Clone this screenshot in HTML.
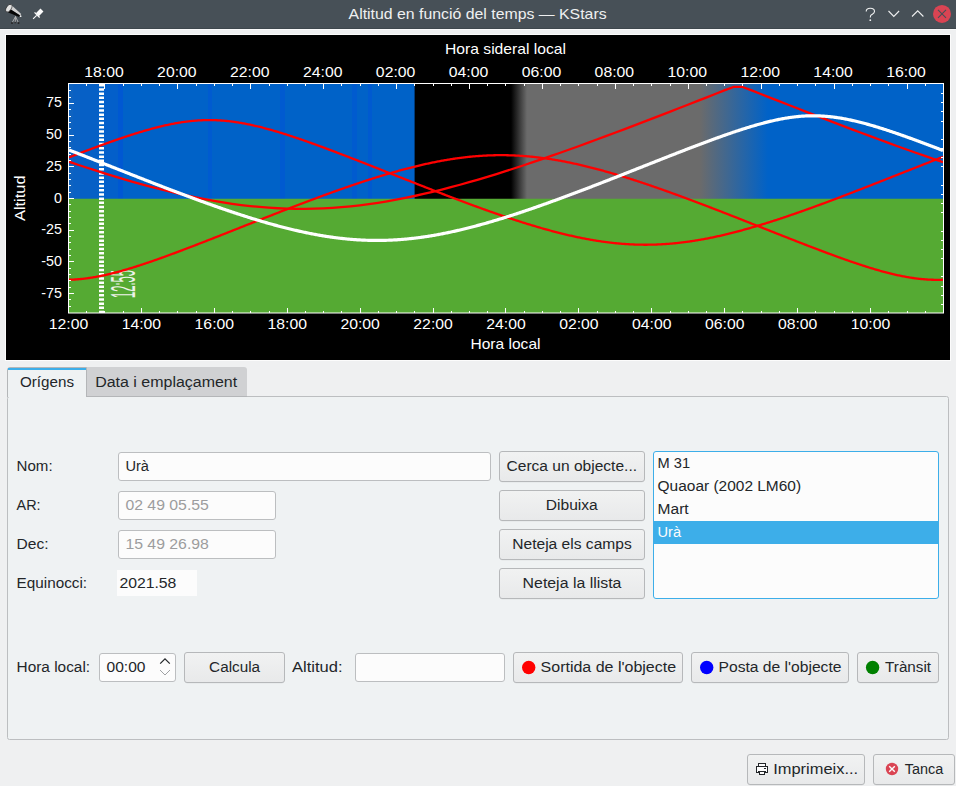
<!DOCTYPE html>
<html><head><meta charset="utf-8">
<style>
html,body{margin:0;padding:0;}
body{width:956px;height:786px;overflow:hidden;background:#eff0f1;position:relative;font-family:"Liberation Sans", sans-serif;}
svg{position:absolute;left:0;top:0;}
</style></head><body>
<svg width="956" height="786" viewBox="0 0 956 786">
<rect x="0" y="0" width="956" height="28" fill="#475057"/>
<rect x="0" y="28" width="956" height="1" fill="#3e474d"/>
<rect x="0" y="29" width="956" height="1" fill="#f8f9f9"/>
<rect x="5" y="34" width="946" height="327" fill="#fcfcfc"/>
<rect x="6" y="35" width="944" height="325" fill="#000"/>
<defs><linearGradient id="g1" x1="511" x2="527" y1="0" y2="0" gradientUnits="userSpaceOnUse"><stop offset="0" stop-color="#000"/><stop offset="1" stop-color="#6b6b6b"/></linearGradient><linearGradient id="g2" x1="700" x2="768" y1="0" y2="0" gradientUnits="userSpaceOnUse"><stop offset="0" stop-color="#6b6b6b"/><stop offset="1" stop-color="#0062c8"/></linearGradient><clipPath id="pc"><rect x="69" y="84" width="874" height="229"/></clipPath></defs>
<rect x="69" y="84" width="346" height="115" fill="#0062c8"/>
<rect x="69" y="84" width="4" height="115" fill="#0f63c0"/>
<rect x="73" y="84" width="7" height="115" fill="#0a61c4"/>
<rect x="80" y="84" width="19" height="115" fill="#0660c6"/>
<rect x="104" y="84" width="14" height="115" fill="#035fca"/>
<rect x="118" y="84" width="5" height="115" fill="#0058d2"/>
<rect x="208" y="84" width="4" height="115" fill="#005bd0"/>
<rect x="280" y="84" width="5" height="115" fill="#005ad0"/>
<rect x="352" y="84" width="5" height="115" fill="#005bcf"/>
<rect x="368" y="84" width="4" height="115" fill="#005ad0"/>
<rect x="414.6" y="84" width="96.4" height="115" fill="#000"/>
<rect x="511" y="84" width="16" height="115" fill="url(#g1)"/>
<rect x="527" y="84" width="173" height="115" fill="#6b6b6b"/>
<rect x="700" y="84" width="68" height="115" fill="url(#g2)"/>
<rect x="768" y="84" width="175" height="115" fill="#0062c8"/>
<rect x="69" y="198.75" width="874" height="114.25" fill="#55aa33"/>
<line x1="101.5" y1="84" x2="101.5" y2="313" stroke="#fff" stroke-width="5" stroke-dasharray="2.5 1.7"/>
<text transform="translate(134.6,298) rotate(-90) scale(1,2.95)" font-family='"Liberation Sans", sans-serif' font-size="12" fill="#eef2ea" textLength="28" lengthAdjust="spacingAndGlyphs">12:55</text>
<g clip-path="url(#pc)" fill="none" stroke-linejoin="round">
<polyline points="69.00,157.42 70.00,157.03 71.00,156.65 72.00,156.26 73.00,155.87 74.00,155.49 75.00,155.11 76.00,154.72 77.00,154.34 78.00,153.95 79.00,153.57 80.00,153.19 81.00,152.81 82.00,152.43 83.00,152.05 84.00,151.67 85.00,151.29 86.00,150.91 87.00,150.53 88.00,150.16 89.00,149.78 90.00,149.41 91.00,149.03 92.00,148.66 93.00,148.29 94.00,147.91 95.00,147.54 96.00,147.17 97.00,146.80 98.00,146.44 99.00,146.07 100.00,145.70 101.00,145.34 102.00,144.97 103.00,144.61 104.00,144.25 105.00,143.88 106.00,143.52 107.00,143.17 108.00,142.81 109.00,142.45 110.00,142.10 111.00,141.74 112.00,141.39 113.00,141.04 114.00,140.69 115.00,140.34 116.00,139.99 117.00,139.64 118.00,139.30 119.00,138.95 120.00,138.61 121.00,138.27 122.00,137.93 123.00,137.60 124.00,137.26 125.00,136.93 126.00,136.60 127.00,136.27 128.00,135.94 129.00,135.61 130.00,135.29 131.00,134.96 132.00,134.64 133.00,134.32 134.00,134.01 135.00,133.69 136.00,133.38 137.00,133.07 138.00,132.76 139.00,132.45 140.00,132.15 141.00,131.85 142.00,131.55 143.00,131.25 144.00,130.96 145.00,130.67 146.00,130.38 147.00,130.09 148.00,129.81 149.00,129.53 150.00,129.25 151.00,128.98 152.00,128.70 153.00,128.43 154.00,128.17 155.00,127.91 156.00,127.65 157.00,127.39 158.00,127.14 159.00,126.89 160.00,126.64 161.00,126.40 162.00,126.16 163.00,125.92 164.00,125.69 165.00,125.46 166.00,125.24 167.00,125.02 168.00,124.80 169.00,124.59 170.00,124.38 171.00,124.18 172.00,123.98 173.00,123.78 174.00,123.59 175.00,123.40 176.00,123.22 177.00,123.04 178.00,122.87 179.00,122.70 180.00,122.54 181.00,122.38 182.00,122.22 183.00,122.08 184.00,121.93 185.00,121.79 186.00,121.66 187.00,121.53 188.00,121.40 189.00,121.29 190.00,121.17 191.00,121.07 192.00,120.96 193.00,120.87 194.00,120.78 195.00,120.69 196.00,120.61 197.00,120.53 198.00,120.47 199.00,120.40 200.00,120.35 201.00,120.29 202.00,120.25 203.00,120.21 204.00,120.17 205.00,120.15 206.00,120.12 207.00,120.11 208.00,120.10 209.00,120.09 210.00,120.09 211.00,120.10 212.00,120.11 213.00,120.13 214.00,120.16 215.00,120.19 216.00,120.22 217.00,120.27 218.00,120.31 219.00,120.37 220.00,120.43 221.00,120.49 222.00,120.56 223.00,120.64 224.00,120.72 225.00,120.81 226.00,120.90 227.00,121.00 228.00,121.11 229.00,121.22 230.00,121.33 231.00,121.45 232.00,121.58 233.00,121.71 234.00,121.85 235.00,121.99 236.00,122.13 237.00,122.29 238.00,122.44 239.00,122.60 240.00,122.77 241.00,122.94 242.00,123.11 243.00,123.29 244.00,123.48 245.00,123.67 246.00,123.86 247.00,124.06 248.00,124.26 249.00,124.46 250.00,124.67 251.00,124.89 252.00,125.11 253.00,125.33 254.00,125.55 255.00,125.78 256.00,126.02 257.00,126.25 258.00,126.50 259.00,126.74 260.00,126.99 261.00,127.24 262.00,127.49 263.00,127.75 264.00,128.01 265.00,128.28 266.00,128.54 267.00,128.81 268.00,129.09 269.00,129.36 270.00,129.64 271.00,129.92 272.00,130.21 273.00,130.49 274.00,130.78 275.00,131.08 276.00,131.37 277.00,131.67 278.00,131.97 279.00,132.27 280.00,132.58 281.00,132.88 282.00,133.19 283.00,133.50 284.00,133.82 285.00,134.13 286.00,134.45 287.00,134.77 288.00,135.09 289.00,135.42 290.00,135.74 291.00,136.07 292.00,136.40 293.00,136.73 294.00,137.06 295.00,137.40 296.00,137.73 297.00,138.07 298.00,138.41 299.00,138.75 300.00,139.09 301.00,139.44 302.00,139.78 303.00,140.13 304.00,140.48 305.00,140.83 306.00,141.18 307.00,141.53 308.00,141.88 309.00,142.24 310.00,142.59 311.00,142.95 312.00,143.31 313.00,143.67 314.00,144.03 315.00,144.39 316.00,144.75 317.00,145.12 318.00,145.48 319.00,145.85 320.00,146.22 321.00,146.58 322.00,146.95 323.00,147.32 324.00,147.69 325.00,148.06 326.00,148.44 327.00,148.81 328.00,149.18 329.00,149.56 330.00,149.93 331.00,150.31 332.00,150.69 333.00,151.06 334.00,151.44 335.00,151.82 336.00,152.20 337.00,152.58 338.00,152.96 339.00,153.34 340.00,153.72 341.00,154.11 342.00,154.49 343.00,154.87 344.00,155.26 345.00,155.64 346.00,156.03 347.00,156.41 348.00,156.80 349.00,157.19 350.00,157.58 351.00,157.96 352.00,158.35 353.00,158.74 354.00,159.13 355.00,159.52 356.00,159.91 357.00,160.30 358.00,160.69 359.00,161.08 360.00,161.47 361.00,161.86 362.00,162.25 363.00,162.64 364.00,163.04 365.00,163.43 366.00,163.82 367.00,164.21 368.00,164.61 369.00,165.00 370.00,165.39 371.00,165.79 372.00,166.18 373.00,166.58 374.00,166.97 375.00,167.36 376.00,167.76 377.00,168.15 378.00,168.55 379.00,168.94 380.00,169.34 381.00,169.73 382.00,170.13 383.00,170.52 384.00,170.92 385.00,171.31 386.00,171.71 387.00,172.11 388.00,172.50 389.00,172.90 390.00,173.29 391.00,173.69 392.00,174.08 393.00,174.48 394.00,174.87 395.00,175.27 396.00,175.67 397.00,176.06 398.00,176.46 399.00,176.85 400.00,177.25 401.00,177.64 402.00,178.04 403.00,178.43 404.00,178.83 405.00,179.22 406.00,179.62 407.00,180.01 408.00,180.41 409.00,180.80 410.00,181.19 411.00,181.59 412.00,181.98 413.00,182.37 414.00,182.77 415.00,183.16 416.00,183.55 417.00,183.95 418.00,184.34 419.00,184.73 420.00,185.12 421.00,185.52 422.00,185.91 423.00,186.30 424.00,186.69 425.00,187.08 426.00,187.47 427.00,187.86 428.00,188.25 429.00,188.64 430.00,189.03 431.00,189.42 432.00,189.81 433.00,190.20 434.00,190.58 435.00,190.97 436.00,191.36 437.00,191.75 438.00,192.13 439.00,192.52 440.00,192.90 441.00,193.29 442.00,193.67 443.00,194.06 444.00,194.44 445.00,194.83 446.00,195.21 447.00,195.59 448.00,195.97 449.00,196.36 450.00,196.74 451.00,197.12 452.00,197.50 453.00,197.88 454.00,198.26 455.00,198.64 456.00,199.01 457.00,199.39 458.00,199.77 459.00,200.14 460.00,200.52 461.00,200.90 462.00,201.27 463.00,201.64 464.00,202.02 465.00,202.39 466.00,202.76 467.00,203.13 468.00,203.51 469.00,203.88 470.00,204.24 471.00,204.61 472.00,204.98 473.00,205.35 474.00,205.72 475.00,206.08 476.00,206.45 477.00,206.81 478.00,207.17 479.00,207.54 480.00,207.90 481.00,208.26 482.00,208.62 483.00,208.98 484.00,209.34 485.00,209.70 486.00,210.05 487.00,210.41 488.00,210.77 489.00,211.12 490.00,211.47 491.00,211.83 492.00,212.18 493.00,212.53 494.00,212.88 495.00,213.23 496.00,213.58 497.00,213.92 498.00,214.27 499.00,214.61 500.00,214.96 501.00,215.30 502.00,215.64 503.00,215.98 504.00,216.32 505.00,216.66 506.00,217.00 507.00,217.33 508.00,217.67 509.00,218.00 510.00,218.33 511.00,218.67 512.00,219.00 513.00,219.32 514.00,219.65 515.00,219.98 516.00,220.30 517.00,220.63 518.00,220.95 519.00,221.27 520.00,221.59 521.00,221.91 522.00,222.23 523.00,222.54 524.00,222.86 525.00,223.17 526.00,223.48 527.00,223.79 528.00,224.10 529.00,224.41 530.00,224.72 531.00,225.02 532.00,225.32 533.00,225.62 534.00,225.92 535.00,226.22 536.00,226.52 537.00,226.81 538.00,227.11 539.00,227.40 540.00,227.69 541.00,227.98 542.00,228.26 543.00,228.55 544.00,228.83 545.00,229.11 546.00,229.39 547.00,229.67 548.00,229.94 549.00,230.22 550.00,230.49 551.00,230.76 552.00,231.03 553.00,231.30 554.00,231.56 555.00,231.82 556.00,232.08 557.00,232.34 558.00,232.60 559.00,232.85 560.00,233.10 561.00,233.35 562.00,233.60 563.00,233.85 564.00,234.09 565.00,234.33 566.00,234.57 567.00,234.81 568.00,235.04 569.00,235.28 570.00,235.51 571.00,235.73 572.00,235.96 573.00,236.18 574.00,236.40 575.00,236.62 576.00,236.84 577.00,237.05 578.00,237.26 579.00,237.47 580.00,237.68 581.00,237.88 582.00,238.08 583.00,238.28 584.00,238.47 585.00,238.67 586.00,238.86 587.00,239.05 588.00,239.23 589.00,239.41 590.00,239.59 591.00,239.77 592.00,239.94 593.00,240.11 594.00,240.28 595.00,240.45 596.00,240.61 597.00,240.77 598.00,240.93 599.00,241.08 600.00,241.23 601.00,241.38 602.00,241.53 603.00,241.67 604.00,241.81 605.00,241.94 606.00,242.08 607.00,242.21 608.00,242.33 609.00,242.46 610.00,242.58 611.00,242.70 612.00,242.81 613.00,242.92 614.00,243.03 615.00,243.14 616.00,243.24 617.00,243.34 618.00,243.43 619.00,243.52 620.00,243.61 621.00,243.70 622.00,243.78 623.00,243.86 624.00,243.93 625.00,244.00 626.00,244.07 627.00,244.14 628.00,244.20 629.00,244.26 630.00,244.32 631.00,244.37 632.00,244.42 633.00,244.46 634.00,244.50 635.00,244.54 636.00,244.58 637.00,244.61 638.00,244.63 639.00,244.66 640.00,244.68 641.00,244.70 642.00,244.71 643.00,244.72 644.00,244.73 645.00,244.73 646.00,244.73 647.00,244.73 648.00,244.72 649.00,244.71 650.00,244.70 651.00,244.68 652.00,244.66 653.00,244.64 654.00,244.61 655.00,244.58 656.00,244.55 657.00,244.51 658.00,244.47 659.00,244.43 660.00,244.38 661.00,244.33 662.00,244.27 663.00,244.21 664.00,244.15 665.00,244.09 666.00,244.02 667.00,243.95 668.00,243.87 669.00,243.80 670.00,243.71 671.00,243.63 672.00,243.54 673.00,243.45 674.00,243.36 675.00,243.26 676.00,243.16 677.00,243.05 678.00,242.94 679.00,242.83 680.00,242.72 681.00,242.60 682.00,242.48 683.00,242.36 684.00,242.23 685.00,242.10 686.00,241.97 687.00,241.84 688.00,241.70 689.00,241.56 690.00,241.41 691.00,241.26 692.00,241.11 693.00,240.96 694.00,240.80 695.00,240.64 696.00,240.48 697.00,240.32 698.00,240.15 699.00,239.98 700.00,239.81 701.00,239.63 702.00,239.45 703.00,239.27 704.00,239.08 705.00,238.90 706.00,238.71 707.00,238.51 708.00,238.32 709.00,238.12 710.00,237.92 711.00,237.72 712.00,237.51 713.00,237.30 714.00,237.09 715.00,236.88 716.00,236.67 717.00,236.45 718.00,236.23 719.00,236.01 720.00,235.78 721.00,235.55 722.00,235.32 723.00,235.09 724.00,234.86 725.00,234.62 726.00,234.38 727.00,234.14 728.00,233.90 729.00,233.65 730.00,233.40 731.00,233.16 732.00,232.90 733.00,232.65 734.00,232.39 735.00,232.14 736.00,231.88 737.00,231.61 738.00,231.35 739.00,231.08 740.00,230.82 741.00,230.55 742.00,230.28 743.00,230.00 744.00,229.73 745.00,229.45 746.00,229.17 747.00,228.89 748.00,228.61 749.00,228.32 750.00,228.04 751.00,227.75 752.00,227.46 753.00,227.17 754.00,226.87 755.00,226.58 756.00,226.28 757.00,225.99 758.00,225.69 759.00,225.39 760.00,225.08 761.00,224.78 762.00,224.47 763.00,224.17 764.00,223.86 765.00,223.55 766.00,223.24 767.00,222.92 768.00,222.61 769.00,222.29 770.00,221.98 771.00,221.66 772.00,221.34 773.00,221.02 774.00,220.70 775.00,220.37 776.00,220.05 777.00,219.72 778.00,219.39 779.00,219.06 780.00,218.73 781.00,218.40 782.00,218.07 783.00,217.74 784.00,217.40 785.00,217.07 786.00,216.73 787.00,216.39 788.00,216.05 789.00,215.71 790.00,215.37 791.00,215.03 792.00,214.68 793.00,214.34 794.00,213.99 795.00,213.65 796.00,213.30 797.00,212.95 798.00,212.60 799.00,212.25 800.00,211.90 801.00,211.55 802.00,211.19 803.00,210.84 804.00,210.48 805.00,210.13 806.00,209.77 807.00,209.41 808.00,209.05 809.00,208.70 810.00,208.34 811.00,207.97 812.00,207.61 813.00,207.25 814.00,206.89 815.00,206.52 816.00,206.16 817.00,205.79 818.00,205.42 819.00,205.06 820.00,204.69 821.00,204.32 822.00,203.95 823.00,203.58 824.00,203.21 825.00,202.84 826.00,202.47 827.00,202.10 828.00,201.72 829.00,201.35 830.00,200.97 831.00,200.60 832.00,200.22 833.00,199.85 834.00,199.47 835.00,199.09 836.00,198.71 837.00,198.34 838.00,197.96 839.00,197.58 840.00,197.20 841.00,196.82 842.00,196.44 843.00,196.05 844.00,195.67 845.00,195.29 846.00,194.91 847.00,194.52 848.00,194.14 849.00,193.75 850.00,193.37 851.00,192.98 852.00,192.60 853.00,192.21 854.00,191.83 855.00,191.44 856.00,191.05 857.00,190.66 858.00,190.28 859.00,189.89 860.00,189.50 861.00,189.11 862.00,188.72 863.00,188.33 864.00,187.94 865.00,187.55 866.00,187.16 867.00,186.77 868.00,186.38 869.00,185.99 870.00,185.60 871.00,185.21 872.00,184.81 873.00,184.42 874.00,184.03 875.00,183.64 876.00,183.24 877.00,182.85 878.00,182.46 879.00,182.06 880.00,181.67 881.00,181.27 882.00,180.88 883.00,180.49 884.00,180.09 885.00,179.70 886.00,179.30 887.00,178.91 888.00,178.51 889.00,178.12 890.00,177.72 891.00,177.33 892.00,176.93 893.00,176.54 894.00,176.14 895.00,175.75 896.00,175.35 897.00,174.96 898.00,174.56 899.00,174.16 900.00,173.77 901.00,173.37 902.00,172.98 903.00,172.58 904.00,172.19 905.00,171.79 906.00,171.40 907.00,171.00 908.00,170.61 909.00,170.21 910.00,169.81 911.00,169.42 912.00,169.02 913.00,168.63 914.00,168.23 915.00,167.84 916.00,167.45 917.00,167.05 918.00,166.66 919.00,166.26 920.00,165.87 921.00,165.47 922.00,165.08 923.00,164.69 924.00,164.29 925.00,163.90 926.00,163.51 927.00,163.12 928.00,162.72 929.00,162.33 930.00,161.94 931.00,161.55 932.00,161.16 933.00,160.77 934.00,160.38 935.00,159.99 936.00,159.60 937.00,159.21 938.00,158.82 939.00,158.43 940.00,158.04 941.00,157.66 942.00,157.27 943.00,156.88" stroke="#ff0000" stroke-width="2.3"/>
<polyline points="69.00,279.76 70.00,279.73 71.00,279.70 72.00,279.65 73.00,279.60 74.00,279.55 75.00,279.49 76.00,279.42 77.00,279.35 78.00,279.27 79.00,279.18 80.00,279.09 81.00,278.99 82.00,278.89 83.00,278.78 84.00,278.67 85.00,278.54 86.00,278.42 87.00,278.29 88.00,278.15 89.00,278.01 90.00,277.86 91.00,277.71 92.00,277.55 93.00,277.38 94.00,277.21 95.00,277.04 96.00,276.86 97.00,276.68 98.00,276.49 99.00,276.30 100.00,276.10 101.00,275.90 102.00,275.69 103.00,275.48 104.00,275.26 105.00,275.05 106.00,274.82 107.00,274.59 108.00,274.36 109.00,274.13 110.00,273.89 111.00,273.64 112.00,273.40 113.00,273.15 114.00,272.89 115.00,272.63 116.00,272.37 117.00,272.11 118.00,271.84 119.00,271.57 120.00,271.30 121.00,271.02 122.00,270.74 123.00,270.46 124.00,270.17 125.00,269.88 126.00,269.59 127.00,269.30 128.00,269.00 129.00,268.70 130.00,268.40 131.00,268.09 132.00,267.79 133.00,267.48 134.00,267.17 135.00,266.85 136.00,266.54 137.00,266.22 138.00,265.90 139.00,265.58 140.00,265.25 141.00,264.92 142.00,264.60 143.00,264.27 144.00,263.93 145.00,263.60 146.00,263.26 147.00,262.93 148.00,262.59 149.00,262.25 150.00,261.91 151.00,261.56 152.00,261.22 153.00,260.87 154.00,260.52 155.00,260.17 156.00,259.82 157.00,259.47 158.00,259.11 159.00,258.76 160.00,258.40 161.00,258.05 162.00,257.69 163.00,257.33 164.00,256.97 165.00,256.60 166.00,256.24 167.00,255.88 168.00,255.51 169.00,255.14 170.00,254.78 171.00,254.41 172.00,254.04 173.00,253.67 174.00,253.30 175.00,252.93 176.00,252.55 177.00,252.18 178.00,251.80 179.00,251.43 180.00,251.05 181.00,250.68 182.00,250.30 183.00,249.92 184.00,249.54 185.00,249.16 186.00,248.78 187.00,248.40 188.00,248.02 189.00,247.64 190.00,247.25 191.00,246.87 192.00,246.49 193.00,246.10 194.00,245.72 195.00,245.33 196.00,244.94 197.00,244.56 198.00,244.17 199.00,243.78 200.00,243.40 201.00,243.01 202.00,242.62 203.00,242.23 204.00,241.84 205.00,241.45 206.00,241.06 207.00,240.67 208.00,240.28 209.00,239.89 210.00,239.50 211.00,239.11 212.00,238.71 213.00,238.32 214.00,237.93 215.00,237.54 216.00,237.14 217.00,236.75 218.00,236.36 219.00,235.96 220.00,235.57 221.00,235.17 222.00,234.78 223.00,234.39 224.00,233.99 225.00,233.60 226.00,233.20 227.00,232.81 228.00,232.41 229.00,232.02 230.00,231.62 231.00,231.23 232.00,230.83 233.00,230.44 234.00,230.04 235.00,229.65 236.00,229.25 237.00,228.85 238.00,228.46 239.00,228.06 240.00,227.67 241.00,227.27 242.00,226.88 243.00,226.48 244.00,226.09 245.00,225.69 246.00,225.29 247.00,224.90 248.00,224.50 249.00,224.11 250.00,223.71 251.00,223.32 252.00,222.92 253.00,222.53 254.00,222.13 255.00,221.74 256.00,221.34 257.00,220.95 258.00,220.56 259.00,220.16 260.00,219.77 261.00,219.37 262.00,218.98 263.00,218.59 264.00,218.19 265.00,217.80 266.00,217.41 267.00,217.02 268.00,216.62 269.00,216.23 270.00,215.84 271.00,215.45 272.00,215.06 273.00,214.67 274.00,214.28 275.00,213.89 276.00,213.50 277.00,213.11 278.00,212.72 279.00,212.33 280.00,211.94 281.00,211.55 282.00,211.16 283.00,210.77 284.00,210.39 285.00,210.00 286.00,209.61 287.00,209.23 288.00,208.84 289.00,208.46 290.00,208.07 291.00,207.69 292.00,207.30 293.00,206.92 294.00,206.53 295.00,206.15 296.00,205.77 297.00,205.39 298.00,205.00 299.00,204.62 300.00,204.24 301.00,203.86 302.00,203.48 303.00,203.10 304.00,202.73 305.00,202.35 306.00,201.97 307.00,201.59 308.00,201.22 309.00,200.84 310.00,200.47 311.00,200.09 312.00,199.72 313.00,199.34 314.00,198.97 315.00,198.60 316.00,198.23 317.00,197.86 318.00,197.48 319.00,197.12 320.00,196.75 321.00,196.38 322.00,196.01 323.00,195.64 324.00,195.28 325.00,194.91 326.00,194.55 327.00,194.18 328.00,193.82 329.00,193.46 330.00,193.10 331.00,192.73 332.00,192.37 333.00,192.02 334.00,191.66 335.00,191.30 336.00,190.94 337.00,190.59 338.00,190.23 339.00,189.88 340.00,189.52 341.00,189.17 342.00,188.82 343.00,188.47 344.00,188.12 345.00,187.77 346.00,187.42 347.00,187.08 348.00,186.73 349.00,186.39 350.00,186.04 351.00,185.70 352.00,185.36 353.00,185.02 354.00,184.68 355.00,184.34 356.00,184.00 357.00,183.66 358.00,183.33 359.00,182.99 360.00,182.66 361.00,182.33 362.00,182.00 363.00,181.67 364.00,181.34 365.00,181.01 366.00,180.69 367.00,180.36 368.00,180.04 369.00,179.72 370.00,179.40 371.00,179.08 372.00,178.76 373.00,178.44 374.00,178.12 375.00,177.81 376.00,177.50 377.00,177.19 378.00,176.88 379.00,176.57 380.00,176.26 381.00,175.95 382.00,175.65 383.00,175.35 384.00,175.04 385.00,174.74 386.00,174.45 387.00,174.15 388.00,173.85 389.00,173.56 390.00,173.27 391.00,172.98 392.00,172.69 393.00,172.40 394.00,172.12 395.00,171.83 396.00,171.55 397.00,171.27 398.00,170.99 399.00,170.71 400.00,170.44 401.00,170.16 402.00,169.89 403.00,169.62 404.00,169.36 405.00,169.09 406.00,168.83 407.00,168.56 408.00,168.30 409.00,168.04 410.00,167.79 411.00,167.53 412.00,167.28 413.00,167.03 414.00,166.78 415.00,166.54 416.00,166.29 417.00,166.05 418.00,165.81 419.00,165.57 420.00,165.34 421.00,165.10 422.00,164.87 423.00,164.64 424.00,164.42 425.00,164.19 426.00,163.97 427.00,163.75 428.00,163.53 429.00,163.32 430.00,163.10 431.00,162.89 432.00,162.69 433.00,162.48 434.00,162.28 435.00,162.08 436.00,161.88 437.00,161.68 438.00,161.49 439.00,161.30 440.00,161.11 441.00,160.93 442.00,160.74 443.00,160.56 444.00,160.39 445.00,160.21 446.00,160.04 447.00,159.87 448.00,159.70 449.00,159.54 450.00,159.38 451.00,159.22 452.00,159.06 453.00,158.91 454.00,158.76 455.00,158.61 456.00,158.47 457.00,158.33 458.00,158.19 459.00,158.05 460.00,157.92 461.00,157.79 462.00,157.66 463.00,157.54 464.00,157.42 465.00,157.30 466.00,157.19 467.00,157.08 468.00,156.97 469.00,156.86 470.00,156.76 471.00,156.66 472.00,156.56 473.00,156.47 474.00,156.38 475.00,156.29 476.00,156.21 477.00,156.13 478.00,156.05 479.00,155.98 480.00,155.91 481.00,155.84 482.00,155.78 483.00,155.72 484.00,155.66 485.00,155.60 486.00,155.55 487.00,155.50 488.00,155.46 489.00,155.42 490.00,155.38 491.00,155.34 492.00,155.31 493.00,155.29 494.00,155.26 495.00,155.24 496.00,155.22 497.00,155.21 498.00,155.19 499.00,155.19 500.00,155.18 501.00,155.18 502.00,155.18 503.00,155.19 504.00,155.19 505.00,155.21 506.00,155.22 507.00,155.24 508.00,155.26 509.00,155.29 510.00,155.31 511.00,155.34 512.00,155.38 513.00,155.42 514.00,155.46 515.00,155.50 516.00,155.55 517.00,155.60 518.00,155.66 519.00,155.72 520.00,155.78 521.00,155.84 522.00,155.91 523.00,155.98 524.00,156.05 525.00,156.13 526.00,156.21 527.00,156.29 528.00,156.38 529.00,156.47 530.00,156.56 531.00,156.66 532.00,156.76 533.00,156.86 534.00,156.97 535.00,157.08 536.00,157.19 537.00,157.30 538.00,157.42 539.00,157.54 540.00,157.66 541.00,157.79 542.00,157.92 543.00,158.05 544.00,158.19 545.00,158.33 546.00,158.47 547.00,158.61 548.00,158.76 549.00,158.91 550.00,159.06 551.00,159.22 552.00,159.38 553.00,159.54 554.00,159.70 555.00,159.87 556.00,160.04 557.00,160.21 558.00,160.39 559.00,160.56 560.00,160.74 561.00,160.93 562.00,161.11 563.00,161.30 564.00,161.49 565.00,161.68 566.00,161.88 567.00,162.08 568.00,162.28 569.00,162.48 570.00,162.69 571.00,162.89 572.00,163.10 573.00,163.32 574.00,163.53 575.00,163.75 576.00,163.97 577.00,164.19 578.00,164.42 579.00,164.64 580.00,164.87 581.00,165.10 582.00,165.34 583.00,165.57 584.00,165.81 585.00,166.05 586.00,166.29 587.00,166.54 588.00,166.78 589.00,167.03 590.00,167.28 591.00,167.53 592.00,167.79 593.00,168.04 594.00,168.30 595.00,168.56 596.00,168.83 597.00,169.09 598.00,169.36 599.00,169.62 600.00,169.89 601.00,170.16 602.00,170.44 603.00,170.71 604.00,170.99 605.00,171.27 606.00,171.55 607.00,171.83 608.00,172.12 609.00,172.40 610.00,172.69 611.00,172.98 612.00,173.27 613.00,173.56 614.00,173.85 615.00,174.15 616.00,174.45 617.00,174.74 618.00,175.04 619.00,175.35 620.00,175.65 621.00,175.95 622.00,176.26 623.00,176.57 624.00,176.88 625.00,177.19 626.00,177.50 627.00,177.81 628.00,178.12 629.00,178.44 630.00,178.76 631.00,179.08 632.00,179.40 633.00,179.72 634.00,180.04 635.00,180.36 636.00,180.69 637.00,181.01 638.00,181.34 639.00,181.67 640.00,182.00 641.00,182.33 642.00,182.66 643.00,182.99 644.00,183.33 645.00,183.66 646.00,184.00 647.00,184.34 648.00,184.68 649.00,185.02 650.00,185.36 651.00,185.70 652.00,186.04 653.00,186.39 654.00,186.73 655.00,187.08 656.00,187.42 657.00,187.77 658.00,188.12 659.00,188.47 660.00,188.82 661.00,189.17 662.00,189.52 663.00,189.88 664.00,190.23 665.00,190.59 666.00,190.94 667.00,191.30 668.00,191.66 669.00,192.02 670.00,192.37 671.00,192.73 672.00,193.10 673.00,193.46 674.00,193.82 675.00,194.18 676.00,194.55 677.00,194.91 678.00,195.28 679.00,195.64 680.00,196.01 681.00,196.38 682.00,196.75 683.00,197.12 684.00,197.48 685.00,197.86 686.00,198.23 687.00,198.60 688.00,198.97 689.00,199.34 690.00,199.72 691.00,200.09 692.00,200.47 693.00,200.84 694.00,201.22 695.00,201.59 696.00,201.97 697.00,202.35 698.00,202.73 699.00,203.10 700.00,203.48 701.00,203.86 702.00,204.24 703.00,204.62 704.00,205.00 705.00,205.39 706.00,205.77 707.00,206.15 708.00,206.53 709.00,206.92 710.00,207.30 711.00,207.69 712.00,208.07 713.00,208.46 714.00,208.84 715.00,209.23 716.00,209.61 717.00,210.00 718.00,210.39 719.00,210.77 720.00,211.16 721.00,211.55 722.00,211.94 723.00,212.33 724.00,212.72 725.00,213.11 726.00,213.50 727.00,213.89 728.00,214.28 729.00,214.67 730.00,215.06 731.00,215.45 732.00,215.84 733.00,216.23 734.00,216.62 735.00,217.02 736.00,217.41 737.00,217.80 738.00,218.19 739.00,218.59 740.00,218.98 741.00,219.37 742.00,219.77 743.00,220.16 744.00,220.56 745.00,220.95 746.00,221.34 747.00,221.74 748.00,222.13 749.00,222.53 750.00,222.92 751.00,223.32 752.00,223.71 753.00,224.11 754.00,224.50 755.00,224.90 756.00,225.29 757.00,225.69 758.00,226.09 759.00,226.48 760.00,226.88 761.00,227.27 762.00,227.67 763.00,228.06 764.00,228.46 765.00,228.85 766.00,229.25 767.00,229.65 768.00,230.04 769.00,230.44 770.00,230.83 771.00,231.23 772.00,231.62 773.00,232.02 774.00,232.41 775.00,232.81 776.00,233.20 777.00,233.60 778.00,233.99 779.00,234.39 780.00,234.78 781.00,235.17 782.00,235.57 783.00,235.96 784.00,236.36 785.00,236.75 786.00,237.14 787.00,237.54 788.00,237.93 789.00,238.32 790.00,238.71 791.00,239.11 792.00,239.50 793.00,239.89 794.00,240.28 795.00,240.67 796.00,241.06 797.00,241.45 798.00,241.84 799.00,242.23 800.00,242.62 801.00,243.01 802.00,243.40 803.00,243.78 804.00,244.17 805.00,244.56 806.00,244.94 807.00,245.33 808.00,245.72 809.00,246.10 810.00,246.49 811.00,246.87 812.00,247.25 813.00,247.64 814.00,248.02 815.00,248.40 816.00,248.78 817.00,249.16 818.00,249.54 819.00,249.92 820.00,250.30 821.00,250.68 822.00,251.05 823.00,251.43 824.00,251.80 825.00,252.18 826.00,252.55 827.00,252.93 828.00,253.30 829.00,253.67 830.00,254.04 831.00,254.41 832.00,254.78 833.00,255.14 834.00,255.51 835.00,255.88 836.00,256.24 837.00,256.60 838.00,256.97 839.00,257.33 840.00,257.69 841.00,258.05 842.00,258.40 843.00,258.76 844.00,259.11 845.00,259.47 846.00,259.82 847.00,260.17 848.00,260.52 849.00,260.87 850.00,261.22 851.00,261.56 852.00,261.91 853.00,262.25 854.00,262.59 855.00,262.93 856.00,263.26 857.00,263.60 858.00,263.93 859.00,264.27 860.00,264.60 861.00,264.92 862.00,265.25 863.00,265.58 864.00,265.90 865.00,266.22 866.00,266.54 867.00,266.85 868.00,267.17 869.00,267.48 870.00,267.79 871.00,268.09 872.00,268.40 873.00,268.70 874.00,269.00 875.00,269.30 876.00,269.59 877.00,269.88 878.00,270.17 879.00,270.46 880.00,270.74 881.00,271.02 882.00,271.30 883.00,271.57 884.00,271.84 885.00,272.11 886.00,272.37 887.00,272.63 888.00,272.89 889.00,273.15 890.00,273.40 891.00,273.64 892.00,273.89 893.00,274.13 894.00,274.36 895.00,274.59 896.00,274.82 897.00,275.05 898.00,275.26 899.00,275.48 900.00,275.69 901.00,275.90 902.00,276.10 903.00,276.30 904.00,276.49 905.00,276.68 906.00,276.86 907.00,277.04 908.00,277.21 909.00,277.38 910.00,277.55 911.00,277.71 912.00,277.86 913.00,278.01 914.00,278.15 915.00,278.29 916.00,278.42 917.00,278.54 918.00,278.67 919.00,278.78 920.00,278.89 921.00,278.99 922.00,279.09 923.00,279.18 924.00,279.27 925.00,279.35 926.00,279.42 927.00,279.49 928.00,279.55 929.00,279.60 930.00,279.65 931.00,279.70 932.00,279.73 933.00,279.76 934.00,279.79 935.00,279.81 936.00,279.82 937.00,279.82 938.00,279.82 939.00,279.81 940.00,279.80 941.00,279.78 942.00,279.75 943.00,279.72" stroke="#ff0000" stroke-width="2.3"/>
<polyline points="69.00,161.71 77.20,164.47 86.31,167.48 95.43,170.43 104.54,173.31 113.66,176.13 122.77,178.87 131.89,181.53 141.00,184.10 150.11,186.58 159.23,188.97 168.34,191.25 177.46,193.43 186.57,195.48 195.69,197.42 204.80,199.22 213.92,200.89 223.03,202.41 232.15,203.79 241.26,205.02 250.37,206.08 259.49,206.98 268.60,207.71 277.72,208.26 286.83,208.64 295.95,208.84 305.06,208.87 314.18,208.71 323.29,208.38 332.40,207.87 341.52,207.18 350.63,206.33 359.75,205.31 368.86,204.13 377.98,202.79 387.09,201.30 396.21,199.67 405.32,197.90 414.44,196.00 423.55,193.97 432.66,191.83 441.78,189.58 450.89,187.22 460.01,184.76 469.12,182.21 478.24,179.57 487.35,176.85 496.47,174.06 505.58,171.19 514.69,168.26 523.81,165.26 532.92,162.21 542.04,159.10 551.15,155.95 560.27,152.74 569.38,149.50 578.50,146.22 587.61,142.90 596.73,139.54 605.84,136.16 614.95,132.74 624.07,129.31 633.18,125.84 642.30,122.36 651.41,118.86 660.53,115.34 669.64,111.81 678.76,108.26 687.87,104.71 696.98,101.14 706.10,97.57 715.21,94.00 724.33,90.43 733.44,86.95 742.56,86.95 751.67,90.43 760.79,94.00 769.90,97.57 779.02,101.14 788.13,104.71 797.24,108.26 806.36,111.81 815.47,115.34 824.59,118.86 833.70,122.36 842.82,125.84 851.93,129.31 861.05,132.74 870.16,136.16 879.27,139.54 888.39,142.90 897.50,146.22 906.62,149.50 915.73,152.74 924.85,155.95 933.96,159.10 943.00,162.18" stroke="#ff0000" stroke-width="2.3"/>
<polyline points="69.00,150.00 70.00,150.39 71.00,150.78 72.00,151.17 73.00,151.55 74.00,151.94 75.00,152.33 76.00,152.72 77.00,153.11 78.00,153.50 79.00,153.89 80.00,154.28 81.00,154.67 82.00,155.06 83.00,155.45 84.00,155.85 85.00,156.24 86.00,156.63 87.00,157.02 88.00,157.42 89.00,157.81 90.00,158.20 91.00,158.60 92.00,158.99 93.00,159.38 94.00,159.78 95.00,160.17 96.00,160.57 97.00,160.96 98.00,161.36 99.00,161.75 100.00,162.15 101.00,162.54 102.00,162.94 103.00,163.33 104.00,163.73 105.00,164.12 106.00,164.52 107.00,164.91 108.00,165.31 109.00,165.70 110.00,166.10 111.00,166.49 112.00,166.89 113.00,167.29 114.00,167.68 115.00,168.08 116.00,168.47 117.00,168.87 118.00,169.26 119.00,169.66 120.00,170.05 121.00,170.45 122.00,170.84 123.00,171.24 124.00,171.63 125.00,172.03 126.00,172.42 127.00,172.82 128.00,173.21 129.00,173.61 130.00,174.00 131.00,174.40 132.00,174.79 133.00,175.18 134.00,175.58 135.00,175.97 136.00,176.36 137.00,176.76 138.00,177.15 139.00,177.54 140.00,177.93 141.00,178.33 142.00,178.72 143.00,179.11 144.00,179.50 145.00,179.89 146.00,180.28 147.00,180.67 148.00,181.06 149.00,181.45 150.00,181.84 151.00,182.23 152.00,182.62 153.00,183.01 154.00,183.40 155.00,183.79 156.00,184.17 157.00,184.56 158.00,184.95 159.00,185.34 160.00,185.72 161.00,186.11 162.00,186.49 163.00,186.88 164.00,187.26 165.00,187.65 166.00,188.03 167.00,188.41 168.00,188.80 169.00,189.18 170.00,189.56 171.00,189.94 172.00,190.32 173.00,190.70 174.00,191.08 175.00,191.46 176.00,191.84 177.00,192.22 178.00,192.60 179.00,192.98 180.00,193.35 181.00,193.73 182.00,194.11 183.00,194.48 184.00,194.86 185.00,195.23 186.00,195.60 187.00,195.98 188.00,196.35 189.00,196.72 190.00,197.09 191.00,197.46 192.00,197.83 193.00,198.20 194.00,198.57 195.00,198.94 196.00,199.30 197.00,199.67 198.00,200.03 199.00,200.40 200.00,200.76 201.00,201.13 202.00,201.49 203.00,201.85 204.00,202.21 205.00,202.57 206.00,202.93 207.00,203.29 208.00,203.65 209.00,204.01 210.00,204.36 211.00,204.72 212.00,205.07 213.00,205.42 214.00,205.78 215.00,206.13 216.00,206.48 217.00,206.83 218.00,207.18 219.00,207.53 220.00,207.87 221.00,208.22 222.00,208.57 223.00,208.91 224.00,209.25 225.00,209.60 226.00,209.94 227.00,210.28 228.00,210.62 229.00,210.95 230.00,211.29 231.00,211.63 232.00,211.96 233.00,212.30 234.00,212.63 235.00,212.96 236.00,213.29 237.00,213.62 238.00,213.95 239.00,214.27 240.00,214.60 241.00,214.92 242.00,215.25 243.00,215.57 244.00,215.89 245.00,216.21 246.00,216.53 247.00,216.84 248.00,217.16 249.00,217.47 250.00,217.79 251.00,218.10 252.00,218.41 253.00,218.72 254.00,219.02 255.00,219.33 256.00,219.63 257.00,219.94 258.00,220.24 259.00,220.54 260.00,220.84 261.00,221.13 262.00,221.43 263.00,221.72 264.00,222.01 265.00,222.31 266.00,222.59 267.00,222.88 268.00,223.17 269.00,223.45 270.00,223.73 271.00,224.01 272.00,224.29 273.00,224.57 274.00,224.85 275.00,225.12 276.00,225.39 277.00,225.66 278.00,225.93 279.00,226.20 280.00,226.46 281.00,226.72 282.00,226.99 283.00,227.24 284.00,227.50 285.00,227.76 286.00,228.01 287.00,228.26 288.00,228.51 289.00,228.76 290.00,229.00 291.00,229.25 292.00,229.49 293.00,229.72 294.00,229.96 295.00,230.20 296.00,230.43 297.00,230.66 298.00,230.89 299.00,231.11 300.00,231.34 301.00,231.56 302.00,231.78 303.00,231.99 304.00,232.21 305.00,232.42 306.00,232.63 307.00,232.84 308.00,233.04 309.00,233.24 310.00,233.45 311.00,233.64 312.00,233.84 313.00,234.03 314.00,234.22 315.00,234.41 316.00,234.59 317.00,234.78 318.00,234.96 319.00,235.13 320.00,235.31 321.00,235.48 322.00,235.65 323.00,235.82 324.00,235.98 325.00,236.14 326.00,236.30 327.00,236.46 328.00,236.61 329.00,236.76 330.00,236.91 331.00,237.05 332.00,237.20 333.00,237.33 334.00,237.47 335.00,237.60 336.00,237.73 337.00,237.86 338.00,237.99 339.00,238.11 340.00,238.23 341.00,238.34 342.00,238.45 343.00,238.56 344.00,238.67 345.00,238.77 346.00,238.88 347.00,238.97 348.00,239.07 349.00,239.16 350.00,239.25 351.00,239.33 352.00,239.41 353.00,239.49 354.00,239.57 355.00,239.64 356.00,239.71 357.00,239.78 358.00,239.84 359.00,239.90 360.00,239.96 361.00,240.01 362.00,240.06 363.00,240.11 364.00,240.15 365.00,240.19 366.00,240.23 367.00,240.26 368.00,240.30 369.00,240.32 370.00,240.35 371.00,240.37 372.00,240.39 373.00,240.40 374.00,240.41 375.00,240.42 376.00,240.43 377.00,240.43 378.00,240.43 379.00,240.42 380.00,240.41 381.00,240.40 382.00,240.39 383.00,240.37 384.00,240.35 385.00,240.32 386.00,240.30 387.00,240.26 388.00,240.23 389.00,240.19 390.00,240.15 391.00,240.11 392.00,240.06 393.00,240.01 394.00,239.96 395.00,239.90 396.00,239.84 397.00,239.78 398.00,239.71 399.00,239.64 400.00,239.57 401.00,239.49 402.00,239.41 403.00,239.33 404.00,239.25 405.00,239.16 406.00,239.07 407.00,238.97 408.00,238.87 409.00,238.77 410.00,238.67 411.00,238.56 412.00,238.45 413.00,238.34 414.00,238.23 415.00,238.11 416.00,237.99 417.00,237.86 418.00,237.73 419.00,237.60 420.00,237.47 421.00,237.33 422.00,237.19 423.00,237.05 424.00,236.91 425.00,236.76 426.00,236.61 427.00,236.46 428.00,236.30 429.00,236.14 430.00,235.98 431.00,235.82 432.00,235.65 433.00,235.48 434.00,235.31 435.00,235.13 436.00,234.96 437.00,234.78 438.00,234.59 439.00,234.41 440.00,234.22 441.00,234.03 442.00,233.84 443.00,233.64 444.00,233.44 445.00,233.24 446.00,233.04 447.00,232.84 448.00,232.63 449.00,232.42 450.00,232.21 451.00,231.99 452.00,231.78 453.00,231.56 454.00,231.33 455.00,231.11 456.00,230.89 457.00,230.66 458.00,230.43 459.00,230.19 460.00,229.96 461.00,229.72 462.00,229.48 463.00,229.24 464.00,229.00 465.00,228.76 466.00,228.51 467.00,228.26 468.00,228.01 469.00,227.75 470.00,227.50 471.00,227.24 472.00,226.98 473.00,226.72 474.00,226.46 475.00,226.20 476.00,225.93 477.00,225.66 478.00,225.39 479.00,225.12 480.00,224.84 481.00,224.57 482.00,224.29 483.00,224.01 484.00,223.73 485.00,223.45 486.00,223.17 487.00,222.88 488.00,222.59 489.00,222.30 490.00,222.01 491.00,221.72 492.00,221.43 493.00,221.13 494.00,220.83 495.00,220.54 496.00,220.24 497.00,219.93 498.00,219.63 499.00,219.33 500.00,219.02 501.00,218.71 502.00,218.41 503.00,218.10 504.00,217.78 505.00,217.47 506.00,217.16 507.00,216.84 508.00,216.53 509.00,216.21 510.00,215.89 511.00,215.57 512.00,215.25 513.00,214.92 514.00,214.60 515.00,214.27 516.00,213.95 517.00,213.62 518.00,213.29 519.00,212.96 520.00,212.63 521.00,212.29 522.00,211.96 523.00,211.63 524.00,211.29 525.00,210.95 526.00,210.61 527.00,210.28 528.00,209.94 529.00,209.59 530.00,209.25 531.00,208.91 532.00,208.56 533.00,208.22 534.00,207.87 535.00,207.53 536.00,207.18 537.00,206.83 538.00,206.48 539.00,206.13 540.00,205.78 541.00,205.42 542.00,205.07 543.00,204.71 544.00,204.36 545.00,204.00 546.00,203.65 547.00,203.29 548.00,202.93 549.00,202.57 550.00,202.21 551.00,201.85 552.00,201.49 553.00,201.12 554.00,200.76 555.00,200.40 556.00,200.03 557.00,199.67 558.00,199.30 559.00,198.93 560.00,198.57 561.00,198.20 562.00,197.83 563.00,197.46 564.00,197.09 565.00,196.72 566.00,196.35 567.00,195.97 568.00,195.60 569.00,195.23 570.00,194.85 571.00,194.48 572.00,194.10 573.00,193.73 574.00,193.35 575.00,192.97 576.00,192.60 577.00,192.22 578.00,191.84 579.00,191.46 580.00,191.08 581.00,190.70 582.00,190.32 583.00,189.94 584.00,189.56 585.00,189.18 586.00,188.79 587.00,188.41 588.00,188.03 589.00,187.64 590.00,187.26 591.00,186.88 592.00,186.49 593.00,186.11 594.00,185.72 595.00,185.33 596.00,184.95 597.00,184.56 598.00,184.17 599.00,183.78 600.00,183.40 601.00,183.01 602.00,182.62 603.00,182.23 604.00,181.84 605.00,181.45 606.00,181.06 607.00,180.67 608.00,180.28 609.00,179.89 610.00,179.50 611.00,179.11 612.00,178.72 613.00,178.32 614.00,177.93 615.00,177.54 616.00,177.15 617.00,176.75 618.00,176.36 619.00,175.97 620.00,175.57 621.00,175.18 622.00,174.79 623.00,174.39 624.00,174.00 625.00,173.60 626.00,173.21 627.00,172.82 628.00,172.42 629.00,172.03 630.00,171.63 631.00,171.24 632.00,170.84 633.00,170.45 634.00,170.05 635.00,169.66 636.00,169.26 637.00,168.86 638.00,168.47 639.00,168.07 640.00,167.68 641.00,167.28 642.00,166.89 643.00,166.49 644.00,166.10 645.00,165.70 646.00,165.30 647.00,164.91 648.00,164.51 649.00,164.12 650.00,163.72 651.00,163.33 652.00,162.93 653.00,162.54 654.00,162.14 655.00,161.75 656.00,161.35 657.00,160.96 658.00,160.56 659.00,160.17 660.00,159.77 661.00,159.38 662.00,158.99 663.00,158.59 664.00,158.20 665.00,157.81 666.00,157.41 667.00,157.02 668.00,156.63 669.00,156.23 670.00,155.84 671.00,155.45 672.00,155.06 673.00,154.67 674.00,154.28 675.00,153.89 676.00,153.50 677.00,153.11 678.00,152.72 679.00,152.33 680.00,151.94 681.00,151.55 682.00,151.16 683.00,150.78 684.00,150.39 685.00,150.00 686.00,149.62 687.00,149.23 688.00,148.84 689.00,148.46 690.00,148.08 691.00,147.69 692.00,147.31 693.00,146.93 694.00,146.55 695.00,146.16 696.00,145.78 697.00,145.40 698.00,145.02 699.00,144.65 700.00,144.27 701.00,143.89 702.00,143.52 703.00,143.14 704.00,142.77 705.00,142.39 706.00,142.02 707.00,141.65 708.00,141.28 709.00,140.91 710.00,140.54 711.00,140.17 712.00,139.80 713.00,139.43 714.00,139.07 715.00,138.70 716.00,138.34 717.00,137.98 718.00,137.62 719.00,137.26 720.00,136.90 721.00,136.54 722.00,136.19 723.00,135.83 724.00,135.48 725.00,135.13 726.00,134.78 727.00,134.43 728.00,134.08 729.00,133.73 730.00,133.39 731.00,133.04 732.00,132.70 733.00,132.36 734.00,132.02 735.00,131.69 736.00,131.35 737.00,131.02 738.00,130.69 739.00,130.36 740.00,130.03 741.00,129.71 742.00,129.39 743.00,129.07 744.00,128.75 745.00,128.43 746.00,128.12 747.00,127.80 748.00,127.49 749.00,127.19 750.00,126.88 751.00,126.58 752.00,126.28 753.00,125.98 754.00,125.69 755.00,125.40 756.00,125.11 757.00,124.82 758.00,124.54 759.00,124.26 760.00,123.99 761.00,123.71 762.00,123.44 763.00,123.17 764.00,122.91 765.00,122.65 766.00,122.40 767.00,122.14 768.00,121.89 769.00,121.65 770.00,121.41 771.00,121.17 772.00,120.94 773.00,120.71 774.00,120.48 775.00,120.26 776.00,120.04 777.00,119.83 778.00,119.62 779.00,119.42 780.00,119.22 781.00,119.03 782.00,118.84 783.00,118.66 784.00,118.48 785.00,118.30 786.00,118.13 787.00,117.97 788.00,117.81 789.00,117.66 790.00,117.51 791.00,117.37 792.00,117.24 793.00,117.11 794.00,116.98 795.00,116.86 796.00,116.75 797.00,116.64 798.00,116.54 799.00,116.45 800.00,116.36 801.00,116.28 802.00,116.20 803.00,116.13 804.00,116.07 805.00,116.01 806.00,115.96 807.00,115.91 808.00,115.88 809.00,115.84 810.00,115.82 811.00,115.80 812.00,115.79 813.00,115.78 814.00,115.79 815.00,115.79 816.00,115.81 817.00,115.83 818.00,115.86 819.00,115.89 820.00,115.93 821.00,115.98 822.00,116.03 823.00,116.09 824.00,116.16 825.00,116.23 826.00,116.31 827.00,116.39 828.00,116.48 829.00,116.58 830.00,116.68 831.00,116.79 832.00,116.91 833.00,117.03 834.00,117.16 835.00,117.29 836.00,117.43 837.00,117.57 838.00,117.72 839.00,117.88 840.00,118.04 841.00,118.20 842.00,118.37 843.00,118.55 844.00,118.73 845.00,118.92 846.00,119.11 847.00,119.30 848.00,119.50 849.00,119.71 850.00,119.92 851.00,120.13 852.00,120.35 853.00,120.57 854.00,120.80 855.00,121.03 856.00,121.26 857.00,121.50 858.00,121.75 859.00,121.99 860.00,122.24 861.00,122.50 862.00,122.76 863.00,123.02 864.00,123.28 865.00,123.55 866.00,123.82 867.00,124.10 868.00,124.37 869.00,124.65 870.00,124.94 871.00,125.22 872.00,125.51 873.00,125.81 874.00,126.10 875.00,126.40 876.00,126.70 877.00,127.00 878.00,127.31 879.00,127.62 880.00,127.93 881.00,128.24 882.00,128.56 883.00,128.87 884.00,129.19 885.00,129.51 886.00,129.84 887.00,130.16 888.00,130.49 889.00,130.82 890.00,131.15 891.00,131.49 892.00,131.82 893.00,132.16 894.00,132.50 895.00,132.84 896.00,133.18 897.00,133.53 898.00,133.87 899.00,134.22 900.00,134.57 901.00,134.92 902.00,135.27 903.00,135.62 904.00,135.97 905.00,136.33 906.00,136.69 907.00,137.04 908.00,137.40 909.00,137.76 910.00,138.12 911.00,138.49 912.00,138.85 913.00,139.21 914.00,139.58 915.00,139.95 916.00,140.31 917.00,140.68 918.00,141.05 919.00,141.42 920.00,141.80 921.00,142.17 922.00,142.54 923.00,142.92 924.00,143.29 925.00,143.67 926.00,144.04 927.00,144.42 928.00,144.80 929.00,145.18 930.00,145.56 931.00,145.94 932.00,146.32 933.00,146.70 934.00,147.08 935.00,147.46 936.00,147.85 937.00,148.23 938.00,148.61 939.00,149.00 940.00,149.38 941.00,149.77 942.00,150.16 943.00,150.54" stroke="#ffffff" stroke-width="3.2"/>
</g>
<rect x="68.5" y="83.5" width="875" height="229.5" fill="none" stroke="#fff" stroke-width="1"/>
<rect x="86" y="84" width="1" height="2" fill="#fff"/>
<rect x="86" y="311" width="1" height="2" fill="#fff"/>
<rect x="104" y="84" width="1" height="5" fill="#fff"/>
<rect x="104" y="311" width="1" height="2" fill="#fff"/>
<rect x="123" y="84" width="1" height="2" fill="#fff"/>
<rect x="123" y="311" width="1" height="2" fill="#fff"/>
<rect x="141" y="84" width="1" height="2" fill="#fff"/>
<rect x="141" y="308" width="1" height="5" fill="#fff"/>
<rect x="159" y="84" width="1" height="2" fill="#fff"/>
<rect x="159" y="311" width="1" height="2" fill="#fff"/>
<rect x="177" y="84" width="1" height="5" fill="#fff"/>
<rect x="177" y="311" width="1" height="2" fill="#fff"/>
<rect x="196" y="84" width="1" height="2" fill="#fff"/>
<rect x="196" y="311" width="1" height="2" fill="#fff"/>
<rect x="214" y="84" width="1" height="2" fill="#fff"/>
<rect x="214" y="308" width="1" height="5" fill="#fff"/>
<rect x="232" y="84" width="1" height="2" fill="#fff"/>
<rect x="232" y="311" width="1" height="2" fill="#fff"/>
<rect x="250" y="84" width="1" height="5" fill="#fff"/>
<rect x="250" y="311" width="1" height="2" fill="#fff"/>
<rect x="269" y="84" width="1" height="2" fill="#fff"/>
<rect x="269" y="311" width="1" height="2" fill="#fff"/>
<rect x="287" y="84" width="1" height="2" fill="#fff"/>
<rect x="287" y="308" width="1" height="5" fill="#fff"/>
<rect x="305" y="84" width="1" height="2" fill="#fff"/>
<rect x="305" y="311" width="1" height="2" fill="#fff"/>
<rect x="323" y="84" width="1" height="5" fill="#fff"/>
<rect x="323" y="311" width="1" height="2" fill="#fff"/>
<rect x="341" y="84" width="1" height="2" fill="#fff"/>
<rect x="341" y="311" width="1" height="2" fill="#fff"/>
<rect x="360" y="84" width="1" height="2" fill="#fff"/>
<rect x="360" y="308" width="1" height="5" fill="#fff"/>
<rect x="378" y="84" width="1" height="2" fill="#fff"/>
<rect x="378" y="311" width="1" height="2" fill="#fff"/>
<rect x="396" y="84" width="1" height="5" fill="#fff"/>
<rect x="396" y="311" width="1" height="2" fill="#fff"/>
<rect x="414" y="84" width="1" height="2" fill="#fff"/>
<rect x="414" y="311" width="1" height="2" fill="#fff"/>
<rect x="433" y="84" width="1" height="2" fill="#fff"/>
<rect x="433" y="308" width="1" height="5" fill="#fff"/>
<rect x="451" y="84" width="1" height="2" fill="#fff"/>
<rect x="451" y="311" width="1" height="2" fill="#fff"/>
<rect x="469" y="84" width="1" height="5" fill="#fff"/>
<rect x="469" y="311" width="1" height="2" fill="#fff"/>
<rect x="487" y="84" width="1" height="2" fill="#fff"/>
<rect x="487" y="311" width="1" height="2" fill="#fff"/>
<rect x="505" y="84" width="1" height="2" fill="#fff"/>
<rect x="505" y="308" width="1" height="5" fill="#fff"/>
<rect x="524" y="84" width="1" height="2" fill="#fff"/>
<rect x="524" y="311" width="1" height="2" fill="#fff"/>
<rect x="542" y="84" width="1" height="5" fill="#fff"/>
<rect x="542" y="311" width="1" height="2" fill="#fff"/>
<rect x="560" y="84" width="1" height="2" fill="#fff"/>
<rect x="560" y="311" width="1" height="2" fill="#fff"/>
<rect x="578" y="84" width="1" height="2" fill="#fff"/>
<rect x="578" y="308" width="1" height="5" fill="#fff"/>
<rect x="597" y="84" width="1" height="2" fill="#fff"/>
<rect x="597" y="311" width="1" height="2" fill="#fff"/>
<rect x="615" y="84" width="1" height="5" fill="#fff"/>
<rect x="615" y="311" width="1" height="2" fill="#fff"/>
<rect x="633" y="84" width="1" height="2" fill="#fff"/>
<rect x="633" y="311" width="1" height="2" fill="#fff"/>
<rect x="651" y="84" width="1" height="2" fill="#fff"/>
<rect x="651" y="308" width="1" height="5" fill="#fff"/>
<rect x="670" y="84" width="1" height="2" fill="#fff"/>
<rect x="670" y="311" width="1" height="2" fill="#fff"/>
<rect x="688" y="84" width="1" height="5" fill="#fff"/>
<rect x="688" y="311" width="1" height="2" fill="#fff"/>
<rect x="706" y="84" width="1" height="2" fill="#fff"/>
<rect x="706" y="311" width="1" height="2" fill="#fff"/>
<rect x="724" y="84" width="1" height="2" fill="#fff"/>
<rect x="724" y="308" width="1" height="5" fill="#fff"/>
<rect x="742" y="84" width="1" height="2" fill="#fff"/>
<rect x="742" y="311" width="1" height="2" fill="#fff"/>
<rect x="761" y="84" width="1" height="5" fill="#fff"/>
<rect x="761" y="311" width="1" height="2" fill="#fff"/>
<rect x="779" y="84" width="1" height="2" fill="#fff"/>
<rect x="779" y="311" width="1" height="2" fill="#fff"/>
<rect x="797" y="84" width="1" height="2" fill="#fff"/>
<rect x="797" y="308" width="1" height="5" fill="#fff"/>
<rect x="815" y="84" width="1" height="2" fill="#fff"/>
<rect x="815" y="311" width="1" height="2" fill="#fff"/>
<rect x="834" y="84" width="1" height="5" fill="#fff"/>
<rect x="834" y="311" width="1" height="2" fill="#fff"/>
<rect x="852" y="84" width="1" height="2" fill="#fff"/>
<rect x="852" y="311" width="1" height="2" fill="#fff"/>
<rect x="870" y="84" width="1" height="2" fill="#fff"/>
<rect x="870" y="308" width="1" height="5" fill="#fff"/>
<rect x="888" y="84" width="1" height="2" fill="#fff"/>
<rect x="888" y="311" width="1" height="2" fill="#fff"/>
<rect x="907" y="84" width="1" height="5" fill="#fff"/>
<rect x="907" y="311" width="1" height="2" fill="#fff"/>
<rect x="925" y="84" width="1" height="2" fill="#fff"/>
<rect x="925" y="311" width="1" height="2" fill="#fff"/>
<rect x="69" y="306" width="2" height="1" fill="#fff"/>
<rect x="69" y="299" width="2" height="1" fill="#fff"/>
<rect x="69" y="293" width="5" height="1" fill="#fff"/>
<rect x="69" y="287" width="2" height="1" fill="#fff"/>
<rect x="69" y="280" width="2" height="1" fill="#fff"/>
<rect x="69" y="274" width="2" height="1" fill="#fff"/>
<rect x="69" y="268" width="2" height="1" fill="#fff"/>
<rect x="69" y="261" width="5" height="1" fill="#fff"/>
<rect x="69" y="255" width="2" height="1" fill="#fff"/>
<rect x="69" y="249" width="2" height="1" fill="#fff"/>
<rect x="69" y="242" width="2" height="1" fill="#fff"/>
<rect x="69" y="236" width="2" height="1" fill="#fff"/>
<rect x="69" y="230" width="5" height="1" fill="#fff"/>
<rect x="69" y="223" width="2" height="1" fill="#fff"/>
<rect x="69" y="217" width="2" height="1" fill="#fff"/>
<rect x="69" y="211" width="2" height="1" fill="#fff"/>
<rect x="69" y="204" width="2" height="1" fill="#fff"/>
<rect x="69" y="198" width="5" height="1" fill="#fff"/>
<rect x="69" y="192" width="2" height="1" fill="#fff"/>
<rect x="69" y="185" width="2" height="1" fill="#fff"/>
<rect x="69" y="179" width="2" height="1" fill="#fff"/>
<rect x="69" y="173" width="2" height="1" fill="#fff"/>
<rect x="69" y="166" width="5" height="1" fill="#fff"/>
<rect x="69" y="160" width="2" height="1" fill="#fff"/>
<rect x="69" y="154" width="2" height="1" fill="#fff"/>
<rect x="69" y="147" width="2" height="1" fill="#fff"/>
<rect x="69" y="141" width="2" height="1" fill="#fff"/>
<rect x="69" y="135" width="5" height="1" fill="#fff"/>
<rect x="69" y="128" width="2" height="1" fill="#fff"/>
<rect x="69" y="122" width="2" height="1" fill="#fff"/>
<rect x="69" y="116" width="2" height="1" fill="#fff"/>
<rect x="69" y="109" width="2" height="1" fill="#fff"/>
<rect x="69" y="103" width="5" height="1" fill="#fff"/>
<rect x="69" y="97" width="2" height="1" fill="#fff"/>
<rect x="69" y="90" width="2" height="1" fill="#fff"/>
<rect x="941" y="93" width="2" height="1" fill="#fff"/>
<rect x="941" y="102" width="2" height="1" fill="#fff"/>
<rect x="941" y="111" width="2" height="1" fill="#fff"/>
<rect x="941" y="121" width="2" height="1" fill="#fff"/>
<rect x="941" y="139" width="2" height="1" fill="#fff"/>
<rect x="941" y="148" width="2" height="1" fill="#fff"/>
<rect x="941" y="157" width="2" height="1" fill="#fff"/>
<rect x="941" y="166" width="2" height="1" fill="#fff"/>
<rect x="941" y="185" width="2" height="1" fill="#fff"/>
<rect x="941" y="194" width="2" height="1" fill="#fff"/>
<rect x="941" y="203" width="2" height="1" fill="#fff"/>
<rect x="941" y="212" width="2" height="1" fill="#fff"/>
<rect x="941" y="231" width="2" height="1" fill="#fff"/>
<rect x="941" y="240" width="2" height="1" fill="#fff"/>
<rect x="941" y="249" width="2" height="1" fill="#fff"/>
<rect x="941" y="258" width="2" height="1" fill="#fff"/>
<rect x="941" y="276" width="2" height="1" fill="#fff"/>
<rect x="941" y="286" width="2" height="1" fill="#fff"/>
<rect x="941" y="295" width="2" height="1" fill="#fff"/>
<rect x="941" y="304" width="2" height="1" fill="#fff"/>
<text x="505.5" y="54" font-family='"Liberation Sans", sans-serif' font-size="14.3" fill="#fff" text-anchor="middle" textLength="121" lengthAdjust="spacingAndGlyphs">Hora sideral local</text>
<text x="505.5" y="349" font-family='"Liberation Sans", sans-serif' font-size="14.3" fill="#fff" text-anchor="middle" textLength="70" lengthAdjust="spacingAndGlyphs">Hora local</text>
<text x="103.958" y="77" font-family='"Liberation Sans", sans-serif' font-size="14.3" fill="#fff" text-anchor="middle" textLength="39.5" lengthAdjust="spacingAndGlyphs">18:00</text>
<text x="176.874" y="77" font-family='"Liberation Sans", sans-serif' font-size="14.3" fill="#fff" text-anchor="middle" textLength="39.5" lengthAdjust="spacingAndGlyphs">20:00</text>
<text x="249.79" y="77" font-family='"Liberation Sans", sans-serif' font-size="14.3" fill="#fff" text-anchor="middle" textLength="39.5" lengthAdjust="spacingAndGlyphs">22:00</text>
<text x="322.706" y="77" font-family='"Liberation Sans", sans-serif' font-size="14.3" fill="#fff" text-anchor="middle" textLength="39.5" lengthAdjust="spacingAndGlyphs">24:00</text>
<text x="395.62199999999996" y="77" font-family='"Liberation Sans", sans-serif' font-size="14.3" fill="#fff" text-anchor="middle" textLength="39.5" lengthAdjust="spacingAndGlyphs">02:00</text>
<text x="468.538" y="77" font-family='"Liberation Sans", sans-serif' font-size="14.3" fill="#fff" text-anchor="middle" textLength="39.5" lengthAdjust="spacingAndGlyphs">04:00</text>
<text x="541.454" y="77" font-family='"Liberation Sans", sans-serif' font-size="14.3" fill="#fff" text-anchor="middle" textLength="39.5" lengthAdjust="spacingAndGlyphs">06:00</text>
<text x="614.37" y="77" font-family='"Liberation Sans", sans-serif' font-size="14.3" fill="#fff" text-anchor="middle" textLength="39.5" lengthAdjust="spacingAndGlyphs">08:00</text>
<text x="687.286" y="77" font-family='"Liberation Sans", sans-serif' font-size="14.3" fill="#fff" text-anchor="middle" textLength="39.5" lengthAdjust="spacingAndGlyphs">10:00</text>
<text x="760.202" y="77" font-family='"Liberation Sans", sans-serif' font-size="14.3" fill="#fff" text-anchor="middle" textLength="39.5" lengthAdjust="spacingAndGlyphs">12:00</text>
<text x="833.1179999999999" y="77" font-family='"Liberation Sans", sans-serif' font-size="14.3" fill="#fff" text-anchor="middle" textLength="39.5" lengthAdjust="spacingAndGlyphs">14:00</text>
<text x="906.034" y="77" font-family='"Liberation Sans", sans-serif' font-size="14.3" fill="#fff" text-anchor="middle" textLength="39.5" lengthAdjust="spacingAndGlyphs">16:00</text>
<text x="68.5" y="329.3" font-family='"Liberation Sans", sans-serif' font-size="14.3" fill="#fff" text-anchor="middle" textLength="39.5" lengthAdjust="spacingAndGlyphs">12:00</text>
<text x="141.416" y="329.3" font-family='"Liberation Sans", sans-serif' font-size="14.3" fill="#fff" text-anchor="middle" textLength="39.5" lengthAdjust="spacingAndGlyphs">14:00</text>
<text x="214.332" y="329.3" font-family='"Liberation Sans", sans-serif' font-size="14.3" fill="#fff" text-anchor="middle" textLength="39.5" lengthAdjust="spacingAndGlyphs">16:00</text>
<text x="287.248" y="329.3" font-family='"Liberation Sans", sans-serif' font-size="14.3" fill="#fff" text-anchor="middle" textLength="39.5" lengthAdjust="spacingAndGlyphs">18:00</text>
<text x="360.164" y="329.3" font-family='"Liberation Sans", sans-serif' font-size="14.3" fill="#fff" text-anchor="middle" textLength="39.5" lengthAdjust="spacingAndGlyphs">20:00</text>
<text x="433.08" y="329.3" font-family='"Liberation Sans", sans-serif' font-size="14.3" fill="#fff" text-anchor="middle" textLength="39.5" lengthAdjust="spacingAndGlyphs">22:00</text>
<text x="505.996" y="329.3" font-family='"Liberation Sans", sans-serif' font-size="14.3" fill="#fff" text-anchor="middle" textLength="39.5" lengthAdjust="spacingAndGlyphs">24:00</text>
<text x="578.912" y="329.3" font-family='"Liberation Sans", sans-serif' font-size="14.3" fill="#fff" text-anchor="middle" textLength="39.5" lengthAdjust="spacingAndGlyphs">02:00</text>
<text x="651.828" y="329.3" font-family='"Liberation Sans", sans-serif' font-size="14.3" fill="#fff" text-anchor="middle" textLength="39.5" lengthAdjust="spacingAndGlyphs">04:00</text>
<text x="724.7439999999999" y="329.3" font-family='"Liberation Sans", sans-serif' font-size="14.3" fill="#fff" text-anchor="middle" textLength="39.5" lengthAdjust="spacingAndGlyphs">06:00</text>
<text x="797.66" y="329.3" font-family='"Liberation Sans", sans-serif' font-size="14.3" fill="#fff" text-anchor="middle" textLength="39.5" lengthAdjust="spacingAndGlyphs">08:00</text>
<text x="870.576" y="329.3" font-family='"Liberation Sans", sans-serif' font-size="14.3" fill="#fff" text-anchor="middle" textLength="39.5" lengthAdjust="spacingAndGlyphs">10:00</text>
<text x="62" y="107.4975" font-family='"Liberation Sans", sans-serif' font-size="14.3" fill="#fff" text-anchor="end">75</text>
<text x="62" y="139.16500000000002" font-family='"Liberation Sans", sans-serif' font-size="14.3" fill="#fff" text-anchor="end">50</text>
<text x="62" y="170.8325" font-family='"Liberation Sans", sans-serif' font-size="14.3" fill="#fff" text-anchor="end">25</text>
<text x="62" y="202.5" font-family='"Liberation Sans", sans-serif' font-size="14.3" fill="#fff" text-anchor="end">0</text>
<text x="62" y="234.1675" font-family='"Liberation Sans", sans-serif' font-size="14.3" fill="#fff" text-anchor="end">-25</text>
<text x="62" y="265.835" font-family='"Liberation Sans", sans-serif' font-size="14.3" fill="#fff" text-anchor="end">-50</text>
<text x="62" y="297.5025" font-family='"Liberation Sans", sans-serif' font-size="14.3" fill="#fff" text-anchor="end">-75</text>
<text transform="translate(25.3,221) rotate(-90)" font-family='"Liberation Sans", sans-serif' font-size="14.3" fill="#fff" textLength="45.5" lengthAdjust="spacingAndGlyphs">Altitud</text>
<defs><linearGradient id="btn" x1="0" x2="0" y1="0" y2="1"><stop offset="0" stop-color="#f1f2f2"/><stop offset="1" stop-color="#e8e9ea"/></linearGradient></defs>
<text x="477.6" y="18.8" font-family='"Liberation Sans", sans-serif' font-size="15" fill="#eff0f1" text-anchor="middle" textLength="258" lengthAdjust="spacingAndGlyphs">Altitud en funció del temps — KStars</text>
<rect x="7.5" y="396.5" width="941" height="343" rx="2" fill="#eff2f3" stroke="#bcbec0"/>
<path d="M86,396.5 L86,367 L244,367 Q247,367 247,370 L247,396.5 Z" fill="#d0d1d3"/>
<rect x="86" y="396" width="161" height="1" fill="#b4b6b8"/>
<path d="M7.5,397 L7.5,370 Q7.5,367.5 10,367.5 L86.5,367.5 L86.5,397" fill="#eff2f3" stroke="#b4b6b8"/>
<rect x="8" y="368" width="78" height="2" fill="#3daee9"/>
<text x="20" y="386.7" font-family='"Liberation Sans", sans-serif' font-size="14" fill="#232629" text-anchor="start" textLength="54" lengthAdjust="spacingAndGlyphs">Orígens</text>
<text x="95.2" y="386.7" font-family='"Liberation Sans", sans-serif' font-size="14" fill="#232629" text-anchor="start" textLength="142" lengthAdjust="spacingAndGlyphs">Data i emplaçament</text>
<text x="16.6" y="470.6" font-family='"Liberation Sans", sans-serif' font-size="14" fill="#232629" text-anchor="start" textLength="36" lengthAdjust="spacingAndGlyphs">Nom:</text>
<text x="16.6" y="510" font-family='"Liberation Sans", sans-serif' font-size="14" fill="#232629" text-anchor="start" textLength="24" lengthAdjust="spacingAndGlyphs">AR:</text>
<text x="16.6" y="548.8" font-family='"Liberation Sans", sans-serif' font-size="14" fill="#232629" text-anchor="start" textLength="32" lengthAdjust="spacingAndGlyphs">Dec:</text>
<text x="16.6" y="587.7" font-family='"Liberation Sans", sans-serif' font-size="14" fill="#232629" text-anchor="start" textLength="70.5" lengthAdjust="spacingAndGlyphs">Equinocci:</text>
<rect x="118.5" y="452.5" width="372" height="28" rx="2.5" fill="#fcfcfc" stroke="#bcbec0"/>
<text x="125.4" y="471" font-family='"Liberation Sans", sans-serif' font-size="14" fill="#232629" text-anchor="start" textLength="23.5" lengthAdjust="spacingAndGlyphs">Urà</text>
<rect x="118.5" y="491.5" width="157" height="28" rx="2.5" fill="#fcfcfc" stroke="#bcbec0"/>
<text x="125.4" y="509.6" font-family='"Liberation Sans", sans-serif' font-size="14" fill="#9c9d9e" text-anchor="start" textLength="83.5" lengthAdjust="spacingAndGlyphs">02 49 05.55</text>
<rect x="118.5" y="530.5" width="157" height="28" rx="2.5" fill="#fcfcfc" stroke="#bcbec0"/>
<text x="125.4" y="548.6" font-family='"Liberation Sans", sans-serif' font-size="14" fill="#9c9d9e" text-anchor="start" textLength="83.5" lengthAdjust="spacingAndGlyphs">15 49 26.98</text>
<rect x="117" y="570" width="80" height="26" fill="#fcfcfc"/>
<text x="119.4" y="587.7" font-family='"Liberation Sans", sans-serif' font-size="14" fill="#232629" text-anchor="start" textLength="57" lengthAdjust="spacingAndGlyphs">2021.58</text>
<rect x="499.5" y="452.5" width="145" height="30" rx="3" fill="#000" fill-opacity="0.06"/>
<rect x="499.5" y="451.5" width="145" height="30" rx="2.5" fill="url(#btn)" stroke="#b6b8ba"/>
<text x="571.8" y="470.7" font-family='"Liberation Sans", sans-serif' font-size="14" fill="#232629" text-anchor="middle" textLength="130.5" lengthAdjust="spacingAndGlyphs">Cerca un objecte...</text>
<rect x="499.5" y="491.5" width="145" height="30" rx="3" fill="#000" fill-opacity="0.06"/>
<rect x="499.5" y="490.5" width="145" height="30" rx="2.5" fill="url(#btn)" stroke="#b6b8ba"/>
<text x="571.8" y="510.2" font-family='"Liberation Sans", sans-serif' font-size="14" fill="#232629" text-anchor="middle" textLength="52" lengthAdjust="spacingAndGlyphs">Dibuixa</text>
<rect x="499.5" y="530.5" width="145" height="30" rx="3" fill="#000" fill-opacity="0.06"/>
<rect x="499.5" y="529.5" width="145" height="30" rx="2.5" fill="url(#btn)" stroke="#b6b8ba"/>
<text x="572" y="548.5" font-family='"Liberation Sans", sans-serif' font-size="14" fill="#232629" text-anchor="middle" textLength="119.5" lengthAdjust="spacingAndGlyphs">Neteja els camps</text>
<rect x="499.5" y="569.5" width="145" height="30" rx="3" fill="#000" fill-opacity="0.06"/>
<rect x="499.5" y="568.5" width="145" height="30" rx="2.5" fill="url(#btn)" stroke="#b6b8ba"/>
<text x="572" y="587.7" font-family='"Liberation Sans", sans-serif' font-size="14" fill="#232629" text-anchor="middle" textLength="98.8" lengthAdjust="spacingAndGlyphs">Neteja la llista</text>
<rect x="653.5" y="451.5" width="285" height="147" rx="2.5" fill="#fcfcfc" stroke="#3daee9"/>
<rect x="654" y="521" width="284" height="23" fill="#3daee9"/>
<text x="657.6" y="467.8" font-family='"Liberation Sans", sans-serif' font-size="14" fill="#232629" text-anchor="start" textLength="32.5" lengthAdjust="spacingAndGlyphs">M 31</text>
<text x="657.6" y="491.2" font-family='"Liberation Sans", sans-serif' font-size="14" fill="#232629" text-anchor="start" textLength="143.5" lengthAdjust="spacingAndGlyphs">Quaoar (2002 LM60)</text>
<text x="657.6" y="514.2" font-family='"Liberation Sans", sans-serif' font-size="14" fill="#232629" text-anchor="start" textLength="31" lengthAdjust="spacingAndGlyphs">Mart</text>
<text x="657.6" y="537" font-family='"Liberation Sans", sans-serif' font-size="14" fill="#fcfcfc" text-anchor="start" textLength="23.5" lengthAdjust="spacingAndGlyphs">Urà</text>
<text x="16.6" y="671.8" font-family='"Liberation Sans", sans-serif' font-size="14" fill="#232629" text-anchor="start" textLength="73.5" lengthAdjust="spacingAndGlyphs">Hora local:</text>
<rect x="99.5" y="653.5" width="76" height="28" rx="2.5" fill="#fcfcfc" stroke="#bcbec0"/>
<text x="106.5" y="671.7" font-family='"Liberation Sans", sans-serif' font-size="14" fill="#232629" text-anchor="start" textLength="39" lengthAdjust="spacingAndGlyphs">00:00</text>
<path d="M160.2,663.6 L165,658.8 L169.8,663.6" fill="none" stroke="#232629" stroke-width="1.25"/>
<path d="M160,670 L165,675 L170,670" fill="none" stroke="#a0a2a4" stroke-width="1"/>
<rect x="184.5" y="653.5" width="100" height="30" rx="3" fill="#000" fill-opacity="0.06"/>
<rect x="184.5" y="652.5" width="100" height="30" rx="2.5" fill="url(#btn)" stroke="#b6b8ba"/>
<text x="234.6" y="671.8" font-family='"Liberation Sans", sans-serif' font-size="14" fill="#232629" text-anchor="middle" textLength="51" lengthAdjust="spacingAndGlyphs">Calcula</text>
<text x="292" y="671.8" font-family='"Liberation Sans", sans-serif' font-size="14" fill="#232629" text-anchor="start" textLength="50.5" lengthAdjust="spacingAndGlyphs">Altitud:</text>
<rect x="355.5" y="653.5" width="149" height="28" rx="2.5" fill="#fcfcfc" stroke="#bcbec0"/>
<rect x="513.5" y="653.5" width="169" height="30" rx="3" fill="#000" fill-opacity="0.06"/>
<rect x="513.5" y="652.5" width="169" height="30" rx="2.5" fill="url(#btn)" stroke="#b6b8ba"/>
<circle cx="528.7" cy="667.5" r="6.7" fill="#ff0000"/>
<text x="540.6" y="671.8" font-family='"Liberation Sans", sans-serif' font-size="14" fill="#232629" text-anchor="start" textLength="135.5" lengthAdjust="spacingAndGlyphs">Sortida de l'objecte</text>
<rect x="691.5" y="653.5" width="157" height="30" rx="3" fill="#000" fill-opacity="0.06"/>
<rect x="691.5" y="652.5" width="157" height="30" rx="2.5" fill="url(#btn)" stroke="#b6b8ba"/>
<circle cx="706.7" cy="667.5" r="6.7" fill="#0000ff"/>
<text x="718.5" y="671.8" font-family='"Liberation Sans", sans-serif' font-size="14" fill="#232629" text-anchor="start" textLength="123" lengthAdjust="spacingAndGlyphs">Posta de l'objecte</text>
<rect x="857.5" y="653.5" width="81" height="30" rx="3" fill="#000" fill-opacity="0.06"/>
<rect x="857.5" y="652.5" width="81" height="30" rx="2.5" fill="url(#btn)" stroke="#b6b8ba"/>
<circle cx="872.6" cy="667.5" r="6.7" fill="#008000"/>
<text x="885.1" y="671.8" font-family='"Liberation Sans", sans-serif' font-size="14" fill="#232629" text-anchor="start" textLength="46" lengthAdjust="spacingAndGlyphs">Trànsit</text>
<rect x="747.5" y="755.5" width="117" height="30" rx="3" fill="#000" fill-opacity="0.06"/>
<rect x="747.5" y="754.5" width="117" height="30" rx="2.5" fill="url(#btn)" stroke="#b6b8ba"/>
<text x="773.2" y="773.9" font-family='"Liberation Sans", sans-serif' font-size="14" fill="#232629" text-anchor="start" textLength="85" lengthAdjust="spacingAndGlyphs">Imprimeix...</text>
<rect x="873.5" y="755.5" width="81" height="30" rx="3" fill="#000" fill-opacity="0.06"/>
<rect x="873.5" y="754.5" width="81" height="30" rx="2.5" fill="url(#btn)" stroke="#b6b8ba"/>
<text x="904.7" y="773.9" font-family='"Liberation Sans", sans-serif' font-size="14" fill="#232629" text-anchor="start" textLength="38.5" lengthAdjust="spacingAndGlyphs">Tanca</text>
<g stroke="#232629" stroke-width="1" fill="#fcfcfc"><rect x="758.5" y="763.5" width="7" height="3"/><rect x="756.5" y="766.5" width="11" height="6"/></g>
<rect x="758" y="771" width="8" height="1" fill="#232629"/><rect x="764" y="768" width="2" height="1" fill="#232629"/>
<rect x="759.5" y="771.5" width="5" height="3" fill="#fcfcfc" stroke="#232629" stroke-width="1"/>
<circle cx="892" cy="769" r="6.2" fill="#da4453"/><path d="M889.2,766.2 L894.8,771.8 M894.8,766.2 L889.2,771.8" stroke="#fcfcfc" stroke-width="1.4"/>
<path d="M934,0" />
<circle cx="942" cy="13.9" r="9" fill="#da4453"/><path d="M938,9.9 L946,17.9 M946,9.9 L938,17.9" stroke="#475057" stroke-width="1.1"/>
<path d="M912,16.5 L917.7,10.8 L923.4,16.5" fill="none" stroke="#eff0f1" stroke-width="1.1"/>
<path d="M888.5,11 L893.8,16.5 L899.1,11" fill="none" stroke="#eff0f1" stroke-width="1.1"/>
<path d="M866.2,11.4 C866.2,9.2 867.9,8.3 870.3,8.3 C872.9,8.3 874.5,9.6 874.5,11.4 C874.5,13.3 872.9,13.9 871.4,14.8 C870.5,15.4 870.3,16 870.3,17.6" fill="none" stroke="#eff0f1" stroke-width="1.1"/><circle cx="870.3" cy="20.2" r="0.9" fill="#eff0f1"/>
<g transform="translate(37,15) rotate(45)" fill="#fcfcfc"><rect x="-2.1" y="-7" width="4.2" height="6.5"/><rect x="-3.6" y="-0.8" width="7.2" height="1.3"/><rect x="-0.55" y="0.5" width="1.1" height="5"/></g>
<path d="M15.5,16.5 L12,23 M15.5,16.5 L18.5,23 M15.5,16.5 L15.2,22.5" stroke="#b8b8b8" stroke-width="0.9" fill="none"/>
<circle cx="12" cy="23" r="1" fill="#222"/><circle cx="18.5" cy="23" r="1" fill="#222"/><circle cx="15.2" cy="22.6" r="0.9" fill="#333"/>
<path d="M11.06,4.66 L21.17,13.98 L20.2,15.5 L8.8,8.2 Z" fill="#d0d0d0"/>
<path d="M8.8,8.2 L20.2,15.5 L19.23,17.02 L6.54,11.74 Z" fill="#050505"/>
<ellipse cx="8.8" cy="8.2" rx="2.4" ry="4.3" transform="rotate(32.6 8.8 8.2)" fill="#e4e4e4" stroke="#222" stroke-width="0.6"/>
<circle cx="20.6" cy="16.2" r="0.9" fill="#eee"/>
</svg>
</body></html>
